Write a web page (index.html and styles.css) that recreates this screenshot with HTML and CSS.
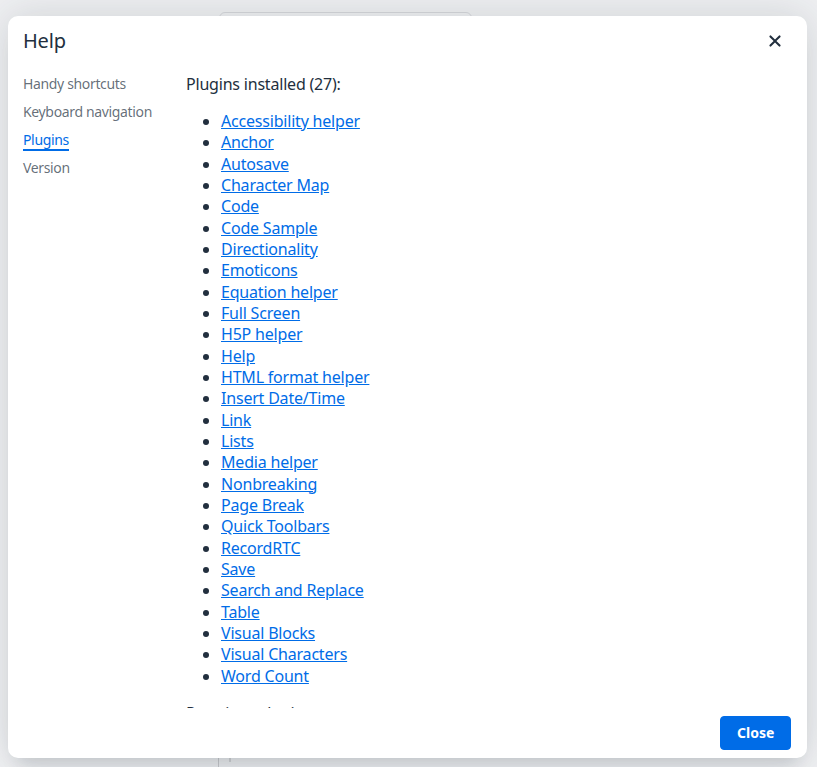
FILE: index.html
```html
<!DOCTYPE html>
<html lang="en">
<head>
<meta charset="utf-8">
<title>Help</title>
<link rel="stylesheet" href="styles.css">
</head>
<body>
<div class="backdrop-page">
  <div class="bg-editor"></div>
  <div class="bg-line bg-line-a"></div>
  <div class="bg-line bg-line-b"></div>
</div>
<div class="dialog" role="dialog">
  <div class="dialog-header">
    <div class="dialog-title">Help</div>
    <button class="close-icon" aria-label="Close">
      <svg width="24" height="24" viewBox="0 0 24 24"><path d="M17.3 8.2L13.4 12l3.9 3.8a1 1 0 0 1-1.5 1.5L12 13.4l-3.8 3.9a1 1 0 0 1-1.5-1.5l3.9-3.8-3.9-3.8a1 1 0 0 1 1.5-1.5l3.8 3.9 3.8-3.9a1 1 0 0 1 1.5 1.5z" fill="#222f3e"/></svg>
    </button>
  </div>
  <div class="dialog-body">
    <nav class="body-nav">
      <a class="nav-item">Handy shortcuts</a>
      <a class="nav-item">Keyboard navigation</a>
      <a class="nav-item active">Plugins</a>
      <a class="nav-item">Version</a>
    </nav>
    <div class="body-content">
      <p class="section-title">Plugins installed (27):</p>
      <ul class="plugin-list">
        <li><a href="#">Accessibility helper</a></li>
        <li><a href="#">Anchor</a></li>
        <li><a href="#">Autosave</a></li>
        <li><a href="#">Character Map</a></li>
        <li><a href="#">Code</a></li>
        <li><a href="#">Code Sample</a></li>
        <li><a href="#">Directionality</a></li>
        <li><a href="#">Emoticons</a></li>
        <li><a href="#">Equation helper</a></li>
        <li><a href="#">Full Screen</a></li>
        <li><a href="#">H5P helper</a></li>
        <li><a href="#">Help</a></li>
        <li><a href="#">HTML format helper</a></li>
        <li><a href="#">Insert Date/Time</a></li>
        <li><a href="#">Link</a></li>
        <li><a href="#">Lists</a></li>
        <li><a href="#">Media helper</a></li>
        <li><a href="#">Nonbreaking</a></li>
        <li><a href="#">Page Break</a></li>
        <li><a href="#">Quick Toolbars</a></li>
        <li><a href="#">RecordRTC</a></li>
        <li><a href="#">Save</a></li>
        <li><a href="#">Search and Replace</a></li>
        <li><a href="#">Table</a></li>
        <li><a href="#">Visual Blocks</a></li>
        <li><a href="#">Visual Characters</a></li>
        <li><a href="#">Word Count</a></li>
      </ul>
      <p class="section-title">Premium plugins:</p>
    </div>
  </div>
  <div class="dialog-footer">
    <button class="btn-primary">Close</button>
  </div>
</div>
</body>
</html>
```
FILE: styles.css
```css
html, body {
  margin: 0;
  height: 100%;
}
body {
  background: #eff0f2;
  font-family: "Noto Sans", "Open Sans", sans-serif;
  color: #222f3e;
  box-sizing: border-box;
  padding: 16px 10px 9px 8px;
  overflow: hidden;
  position: relative;
}
.backdrop-page {
  position: absolute;
  inset: 0;
  z-index: 0;
}
.bg-editor {
  position: absolute;
  left: 219px;
  top: 12px;
  width: 251px;
  height: 60px;
  border: 1px solid #d6d7da;
  border-radius: 6px;
}
.bg-line {
  position: absolute;
  top: 740px;
  bottom: 0;
  width: 1px;
  background: #c9cacd;
}
.bg-line-a { left: 218px; }
.bg-line-b { left: 229px; top: 757px; height: 5px; bottom: auto; width: 2px; background: #d3d4d6; }

.dialog {
  position: relative;
  z-index: 1;
  height: 100%;
  background: #fff;
  border-radius: 10px;
  box-shadow: 0 16px 16px -10px rgba(34, 47, 62, .15), 0 0 40px 1px rgba(34, 47, 62, .15);
  display: flex;
  flex-direction: column;
  overflow: hidden;
}
.dialog-header {
  display: flex;
  align-items: center;
  justify-content: space-between;
  padding: 8px 16px 0 15px;
  height: 34px;
}
.dialog-title {
  font-size: 20px;
  line-height: 1.3;
  letter-spacing: -0.2px;
}
.close-icon {
  width: 34px;
  height: 34px;
  border: 0;
  background: transparent;
  padding: 0;
  display: flex;
  align-items: center;
  justify-content: center;
  margin-right: -1px;
}
.dialog-body {
  flex: 1;
  min-height: 0;
  display: flex;
  padding: 16px 16px 0 15px;
  overflow: hidden;
}
.body-nav {
  width: 147px;
  flex: none;
  display: flex;
  flex-direction: column;
  align-items: flex-start;
  gap: 10px;
  padding-top: 1px;
}
.nav-item {
  font-size: 14px;
  line-height: 18px;
  letter-spacing: -0.35px;
  color: rgba(34, 47, 62, .7);
  text-decoration: none;
}
.nav-item.active {
  color: #006ce7;
  border-bottom: 2px solid #006ce7;
  margin-bottom: -2px;
}
.body-content {
  flex: 1;
  padding-left: 16px;
  min-height: 0;
}
.section-title {
  margin: 0 0 16px 0;
  font-size: 16px;
  line-height: 21px;
  letter-spacing: -0.2px;
}
.plugin-list {
  margin: 0 0 16px 0;
  padding-left: 35px;
  font-size: 16px;
  line-height: 21.33px;
  letter-spacing: -0.2px;
}
.plugin-list a {
  color: #006ce7;
  text-decoration: underline;
}
.dialog-footer {
  display: flex;
  justify-content: flex-end;
  padding: 8px 16px;
}
.btn-primary {
  background: #006ce7;
  border: 1px solid #006ce7;
  color: #fff;
  font-family: inherit;
  font-weight: 700;
  font-size: 14px;
  line-height: 24px;
  padding: 4px 16px;
  border-radius: 4px;
  width: 71px;
  height: 34px;
}
```
